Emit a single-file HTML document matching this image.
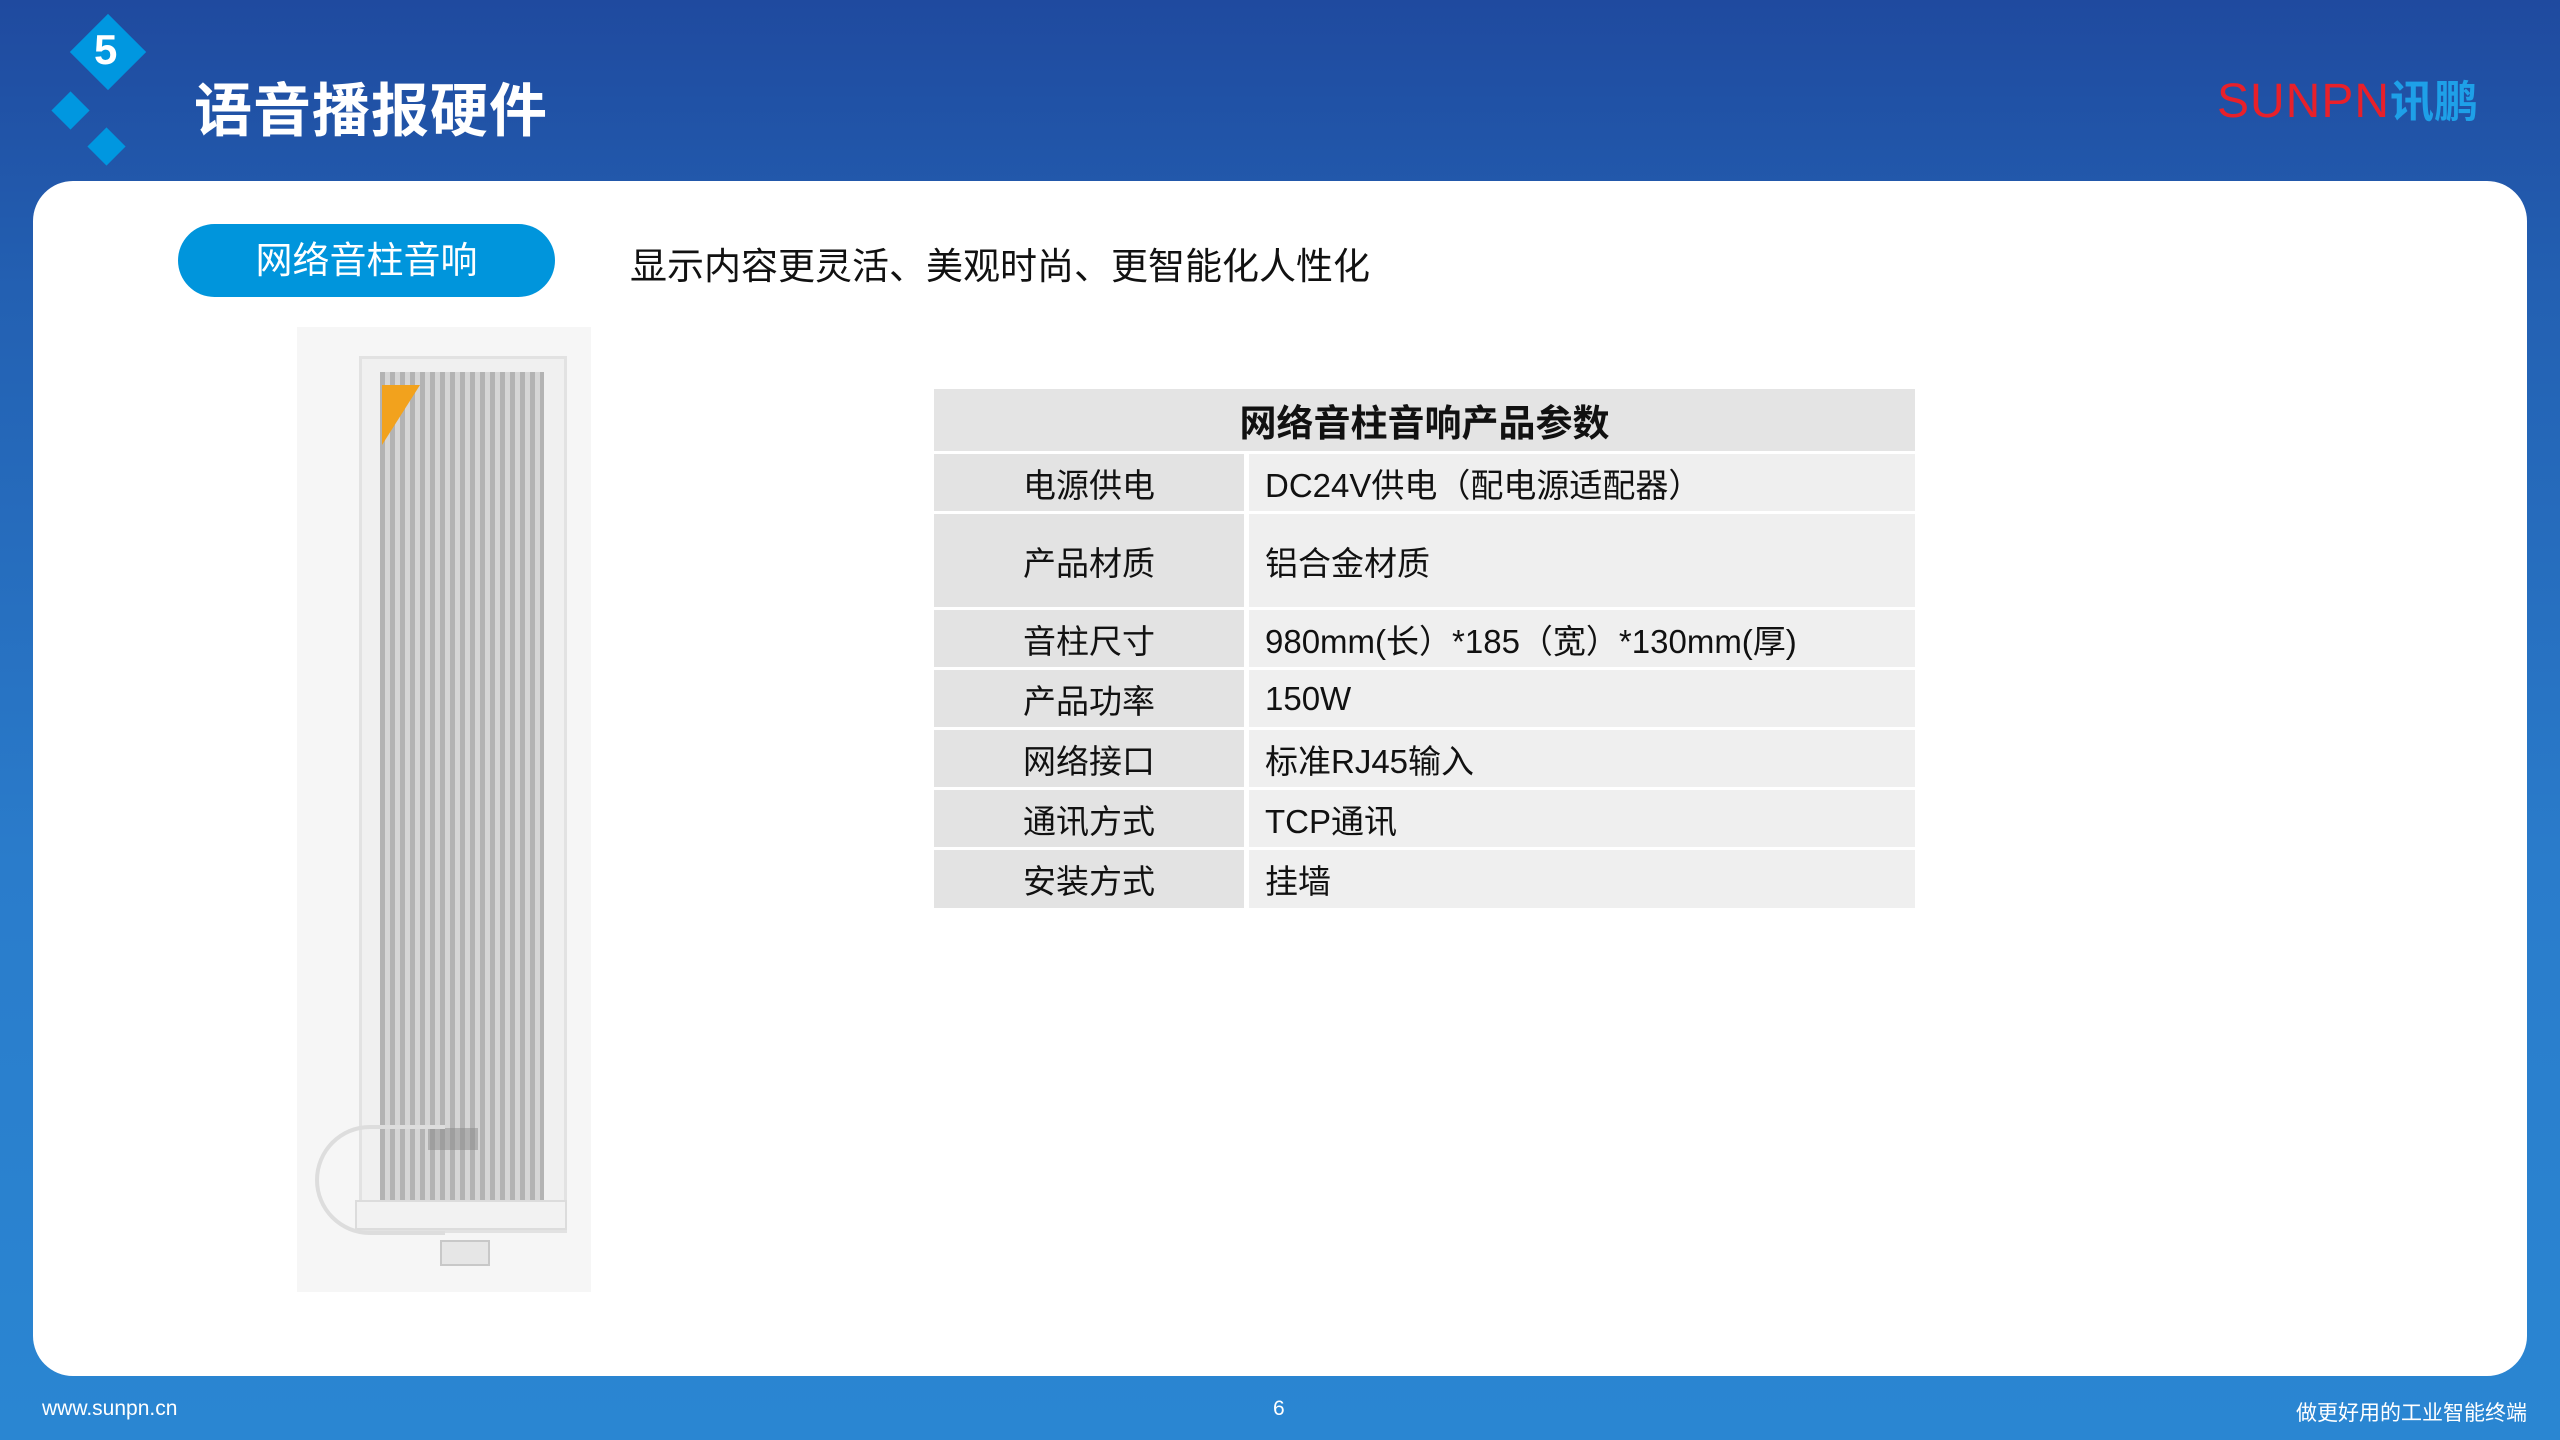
<!DOCTYPE html>
<html><head><meta charset="utf-8"><style>
*{margin:0;padding:0;box-sizing:border-box}
body{width:2560px;height:1440px;overflow:hidden;position:relative;font-family:"Liberation Sans","Noto Sans CJK SC",sans-serif;background:linear-gradient(180deg,#1f4a9f 0%,#2360b2 20%,#2a7ccb 60%,#2a86d2 100%)}
.card{position:absolute;left:33px;top:181px;width:2494px;height:1195px;background:#fff;border-radius:40px}
.d{position:absolute;background:#0097e0;transform:rotate(45deg)}
.title{position:absolute;left:194px;top:64px;font-size:58px;font-weight:bold;color:#fff;letter-spacing:1px}
.logo{position:absolute;left:2217px;top:66px;font-size:48px;white-space:nowrap}
.pill{position:absolute;left:178px;top:224px;width:377px;height:73px;border-radius:37px;background:#0095dc;color:#fff;font-size:37px;text-align:center;line-height:73px}
.sub{position:absolute;left:630px;top:236px;font-size:37px;color:#111;white-space:nowrap}
table{position:absolute;left:934px;top:386px;width:981px;border-collapse:separate;border-spacing:0 3px}
td{font-size:33px;color:#111}
.h{background:#e4e4e4;text-align:center;font-weight:bold;font-size:37px;height:62px}
.l{background:#e3e3e3;width:315px;text-align:center;border-right:5px solid #fff}
.v{background:#efefef;padding-left:16px}
.ft{position:absolute;top:1397px;color:#fff;font-size:21px}
</style></head><body>
<div class="d" style="left:81px;top:25px;width:54px;height:54px"></div>
<div style="position:absolute;left:94px;top:26px;color:#fff;font-size:42px;font-weight:bold">5</div>
<div class="d" style="left:57px;top:97px;width:27px;height:27px"></div>
<div class="d" style="left:93px;top:133px;width:27px;height:27px"></div>
<div class="title">语音播报硬件</div>
<div class="logo"><span style="color:#e8202a;letter-spacing:1px">SUNPN</span><span style="color:#1ea0e8;font-weight:bold;font-size:44px">讯鹏</span></div>
<div class="card"></div>
<div class="pill">网络音柱音响</div>
<div class="sub">显示内容更灵活、美观时尚、更智能化人性化</div>
<div style="position:absolute;left:297px;top:327px;width:294px;height:965px;background:#f6f6f6"></div>
<div style="position:absolute;left:359px;top:356px;width:208px;height:877px;background:#f0f0f0;border:3px solid #e2e2e2"></div>
<div style="position:absolute;left:380px;top:372px;width:164px;height:840px;background:repeating-linear-gradient(90deg,#b3b3b3 0 5px,#d6d6d6 5px 10px)"></div>
<div style="position:absolute;left:382px;top:385px;width:38px;height:60px;background:#f2a21d;clip-path:polygon(0 0,100% 0,0 100%)"></div>
<div style="position:absolute;left:428px;top:1128px;width:50px;height:22px;background:#8a8a8a;opacity:.5"></div>
<div style="position:absolute;left:355px;top:1200px;width:212px;height:30px;background:#f2f2f2;border:2px solid #dcdcdc"></div>
<div style="position:absolute;left:315px;top:1125px;width:130px;height:110px;border:4px solid #ddd;border-radius:60px 0 0 60px;border-right:none"></div>
<div style="position:absolute;left:440px;top:1240px;width:50px;height:26px;background:#e6e6e6;border:2px solid #c8c8c8"></div>
<table>
<tr><td colspan="2" class="h">网络音柱音响产品参数</td></tr>
<tr style="height:57px"><td class="l">电源供电</td><td class="v">DC24V供电（配电源适配器）</td></tr>
<tr style="height:93px"><td class="l">产品材质</td><td class="v">铝合金材质</td></tr>
<tr style="height:57px"><td class="l">音柱尺寸</td><td class="v">980mm(长）*185（宽）*130mm(厚)</td></tr>
<tr style="height:57px"><td class="l">产品功率</td><td class="v">150W</td></tr>
<tr style="height:57px"><td class="l">网络接口</td><td class="v">标准RJ45输入</td></tr>
<tr style="height:57px"><td class="l">通讯方式</td><td class="v">TCP通讯</td></tr>
<tr style="height:58px"><td class="l">安装方式</td><td class="v">挂墙</td></tr>
</table>
<div class="ft" style="left:42px">www.sunpn.cn</div>
<div class="ft" style="left:1273px">6</div>
<div class="ft" style="right:33px">做更好用的工业智能终端</div>
</body></html>
